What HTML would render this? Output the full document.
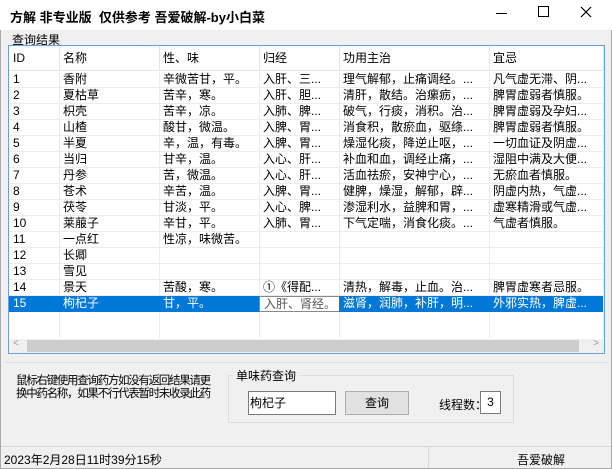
<!DOCTYPE html>
<html><head><meta charset="utf-8"><style>
*{margin:0;padding:0;box-sizing:border-box}
body{width:612px;height:469px;background:#f0f0f0;font-family:"Liberation Sans","Noto Sans CJK SC",sans-serif;font-size:12px;color:#000;position:relative;overflow:hidden}
.a{position:absolute;white-space:nowrap}
#win{position:absolute;left:0;top:0;width:612px;height:469px;border:1px solid #aaa}
#title{position:absolute;left:0;top:0;width:612px;height:30px;background:#fff}
#lv{position:absolute;left:8px;top:45px;width:597px;height:309px;border:1px solid #6aa0d8;background:#fff;overflow:hidden}
.row{position:absolute;left:0;width:595px;height:16px;border-bottom:1px solid #ececec;line-height:15px}
.c{position:absolute;top:0;overflow:hidden;white-space:nowrap;padding-left:4px}
.vl{position:absolute;top:0;width:1px;height:292px;background:#ececec}
.hd{position:absolute;top:0;left:0;width:595px;height:25px;border-bottom:1px solid #e5e5e5;line-height:25px}
.hs{position:absolute;top:0;width:1px;height:25px;background:#e5e5e5}
</style></head><body>
<div id="win"></div>
<div id="title"></div>
<div class="a" style="left:10px;top:7px;font-weight:bold;font-size:13px">方解 非专业版&nbsp; 仅供参考 吾爱破解-by小白菜</div>
<div class="a" style="left:496px;top:13px;width:11px;height:1px;background:#000"></div>
<div class="a" style="left:538px;top:6px;width:11px;height:11px;border:1px solid #000"></div>
<svg class="a" style="left:580px;top:6px" width="12" height="12"><path d="M1 1L11 11M11 1L1 11" stroke="#000" stroke-width="1.2"/></svg>
<div class="a" style="left:12px;top:31px;font-size:12px">查询结果</div>
<div id="lv">
<div class="hd">
<div class="c" style="left:0">ID</div><div class="c" style="left:50px">名称</div><div class="c" style="left:150px">性、味</div><div class="c" style="left:250px">归经</div><div class="c" style="left:330px">功用主治</div><div class="c" style="left:480px">宜忌</div>
<div class="hs" style="left:50px"></div><div class="hs" style="left:150px"></div><div class="hs" style="left:250px"></div><div class="hs" style="left:330px"></div><div class="hs" style="left:480px"></div><div class="hs" style="left:594px"></div>
</div>
<div class="vl" style="left:50px;top:26px;height:266px"></div><div class="vl" style="left:150px;top:26px;height:266px"></div><div class="vl" style="left:250px;top:26px;height:266px"></div><div class="vl" style="left:330px;top:26px;height:266px"></div><div class="vl" style="left:480px;top:26px;height:266px"></div><div class="vl" style="left:594px;top:26px;height:266px"></div>
<div id="rows"></div>
<div style="position:absolute;left:0;top:293px;width:595px;height:14px;background:#f0f0f0"><div style="position:absolute;left:18px;top:1px;width:552px;height:12px;background:#cdcdcd"></div><span style="position:absolute;left:4px;top:-1px;color:#999;font-size:10px">&lt;</span><span style="position:absolute;right:5px;top:-1px;color:#999;font-size:10px">&gt;</span></div>
</div>
<script>
var d=[["1","香附","辛微苦甘，平。","入肝、三...","理气解郁，止痛调经。...","凡气虚无滞、阴..."],
["2","夏枯草","苦辛，寒。","入肝、胆...","清肝，散结。治瘰疬，...","脾胃虚弱者慎服。"],
["3","枳壳","苦辛，凉。","入肺、脾...","破气，行痰，消积。治...","脾胃虚弱及孕妇..."],
["4","山楂","酸甘，微温。","入脾、胃...","消食积，散瘀血，驱绦...","脾胃虚弱者慎服。"],
["5","半夏","辛，温，有毒。","入脾、胃...","燥湿化痰，降逆止呕，...","一切血证及阴虚..."],
["6","当归","甘辛，温。","入心、肝...","补血和血，调经止痛，...","湿阻中满及大便..."],
["7","丹参","苦，微温。","入心、肝...","活血祛瘀，安神宁心，...","无瘀血者慎服。"],
["8","苍术","辛苦，温。","入脾、胃...","健脾，燥湿，解郁，辟...","阴虚内热，气虚..."],
["9","茯苓","甘淡，平。","入心、脾...","渗湿利水，益脾和胃，...","虚寒精滑或气虚..."],
["10","莱菔子","辛甘，平。","入肺、胃...","下气定喘，消食化痰。...","气虚者慎服。"],
["11","一点红","性凉，味微苦。","","",""],["12","长卿","","","",""],["13","雪见","","","",""],
["14","景天","苦酸，寒。","①《得配...","清热，解毒，止血。治...","脾胃虚寒者忌服。"],
["15","枸杞子","甘，平。","入肝、肾经。","滋肾，润肺，补肝，明...","外邪实热，脾虚..."]];
var L=[0,50,150,250,330,480],W=[50,100,100,80,150,114],h="";
d.forEach(function(r,i){var t=26+i*16;h+='<div class="row" style="top:'+t+'px">';
r.forEach(function(v,j){var s=(i==14)?(j==3?'background:#fff;color:#555;border:1px solid #888;height:16px;width:84px;':'background:#0078d7;color:#fff;'):'';
h+='<div class="c" style="left:'+L[j]+'px;width:'+W[j]+'px;height:16px;'+s+'">'+v+'</div>';});h+='</div>';});
document.getElementById('rows').innerHTML=h;
</script>
<div class="a" style="left:5px;top:362px;width:602px;height:1px;background:#ddd"></div>
<div class="a" style="left:16px;top:375px;line-height:13px;font-size:11.5px;letter-spacing:-1.3px">鼠标右键使用查询药方如没有返回结果请更<br>换中药名称，如果不行代表暂时未收录此药</div>
<div class="a" style="left:228px;top:375px;width:286px;height:48px;border:1px solid #dcdcdc"></div>
<div class="a" style="left:233px;top:367px;background:#f0f0f0;padding:0 3px">单味药查询</div>
<div class="a" style="left:248px;top:391px;width:88px;height:24px;background:#fff;border:1px solid #7a7a7a;line-height:22px;padding-left:1px">枸杞子</div>
<div class="a" style="left:345px;top:391px;width:64px;height:24px;background:#e1e1e1;border:1px solid #adadad;line-height:22px;text-align:center">查询</div>
<div class="a" style="left:439px;top:396px">线程数：</div>
<div class="a" style="left:480px;top:391px;width:21px;height:23px;background:#fff;border:1px solid #7a7a7a;line-height:21px;text-align:center">3</div>
<div class="a" style="left:1px;top:446px;width:610px;height:1px;background:#d8d8d8"></div>
<div class="a" style="left:428px;top:447px;width:1px;height:21px;background:#d8d8d8"></div>
<div class="a" style="left:4px;top:451px">2023年2月28日11时39分15秒</div>
<div class="a" style="left:517px;top:451px">吾爱破解</div>
</body></html>
